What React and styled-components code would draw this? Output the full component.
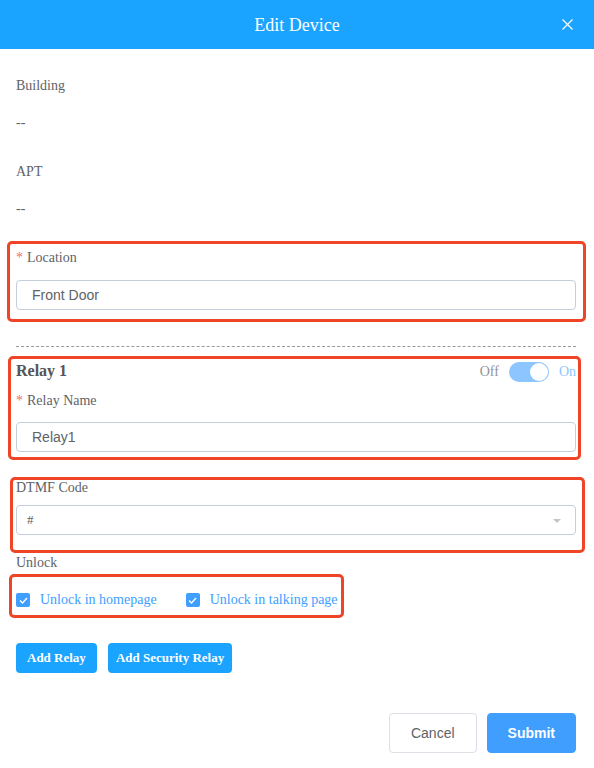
import React from "react"
import styled, { createGlobalStyle } from "styled-components"

const GlobalStyle = createGlobalStyle`
  body {
    margin: 0;
    background: #fff;
    font-family: "Liberation Serif", "Times New Roman", serif;
    color: #606266;
  }
`

const Dialog = styled.div`
  width: 594px;
  min-height: 768px;
  background: #fff;
`

const Header = styled.div`
  height: 49px;
  background: #1aa3ff;
  display: grid;
  grid-template-columns: 1fr auto 1fr;
  align-items: center;
  > .header__title {
    color: #fff;
    font-size: 18px;
    line-height: 24px;
    padding-top: 1px;
  }
  > .header__close {
    justify-self: end;
    margin-right: 21px;
    display: flex;
    background: none;
    border: 0;
    padding: 0;
    cursor: pointer;
  }
`

const Body = styled.div`
  padding: 0 18px 0 16px;
  display: flex;
  flex-direction: column;
`

const Label = styled.div`
  font-size: 14px;
  line-height: ${(props) => props.lh || 20}px;
  margin-top: ${(props) => props.mt || 0}px;
  color: #606266;
  > .label__star {
    color: #f56c6c;
    margin-right: 4px;
  }
`

const Value = styled.div`
  font-size: 14px;
  line-height: 20px;
  margin-top: 17px;
  color: #606266;
`

const Highlight = styled.div`
  border: 3px solid #ef4426;
  border-radius: 5px;
  margin: ${(props) => props.margin};
  padding: ${(props) => props.padding};
  display: ${(props) => (props.inline ? "flex" : "block")};
  gap: ${(props) => (props.inline ? "29px" : "0")};
  align-self: ${(props) => (props.inline ? "flex-start" : "stretch")};
`

const Input = styled.div`
  height: 30px;
  box-sizing: border-box;
  margin-top: ${(props) => props.mt || 12}px;
  border: 1px solid #c4cfdb;
  border-radius: 4px;
  display: flex;
  align-items: center;
  padding: 0 15px;
  font-family: "Liberation Sans", Arial, sans-serif;
  font-size: 14px;
  color: #606266;
`

const Select = styled(Input)`
  padding: 0 14px 0 10px;
  justify-content: space-between;
  font-family: "Liberation Serif", "Times New Roman", serif;
  font-size: 13px;
  > .select__arrow {
    width: 0;
    height: 0;
    border-left: 4px solid transparent;
    border-right: 4px solid transparent;
    border-top: 4px solid #c0c4cc;
    margin-top: 2px;
  }
`

const Divider = styled.div`
  margin-top: 24px;
  border-top: 1px dashed #9a9a9a;
`

const RelayHead = styled.div`
  display: flex;
  align-items: center;
  justify-content: space-between;
  height: 20px;
  > .relayHead__title {
    font-weight: bold;
    font-size: 16px;
    color: #555;
    margin-top: -2px;
  }
`

const SwitchWrap = styled.div`
  display: flex;
  align-items: center;
  font-size: 14px;
  > .switch__off {
    color: #909399;
    margin-right: 10px;
  }
  > .switch__on {
    color: #8cc5ff;
    margin-left: 10px;
  }
`

const Switch = styled.div`
  width: 40px;
  height: 20px;
  border-radius: 10px;
  background: #8cc5ff;
  display: flex;
  align-items: center;
  justify-content: flex-end;
  padding: 0 1px;
  box-sizing: border-box;
  > .switch__knob {
    width: 18px;
    height: 18px;
    border-radius: 50%;
    background: #fff;
  }
`

const CheckItem = styled.label`
  display: flex;
  align-items: center;
  gap: 10px;
  height: 20px;
  font-size: 14px;
  color: #409eff;
`

const CheckBox = styled.span`
  width: 14px;
  height: 14px;
  border-radius: 2px;
  background: #409eff;
  display: flex;
  align-items: center;
  justify-content: center;
`

const ButtonRow = styled.div`
  display: flex;
  gap: 11px;
  margin-top: 25px;
`

const SmallButton = styled.button`
  height: 30px;
  padding: 0 ${(props) => props.pad || 11}px;
  border: 0;
  border-radius: 4px;
  background: #1aa3ff;
  color: #fff;
  font-family: "Liberation Serif", "Times New Roman", serif;
  font-weight: bold;
  font-size: 13px;
  cursor: pointer;
`

const Footer = styled.div`
  display: flex;
  justify-content: flex-end;
  gap: 10px;
  margin-top: 40px;
`

const FooterButton = styled.button`
  height: 40px;
  box-sizing: border-box;
  padding: 0 ${(props) => (props.primary ? 20 : 21)}px;
  border-radius: 4px;
  border: 1px solid ${(props) => (props.primary ? "#409eff" : "#dcdfe6")};
  background: ${(props) => (props.primary ? "#409eff" : "#fff")};
  color: ${(props) => (props.primary ? "#fff" : "#606266")};
  font-family: "Liberation Sans", Arial, sans-serif;
  font-weight: ${(props) => (props.primary ? "bold" : "normal")};
  font-size: 14px;
  cursor: pointer;
`

const Check = () => (
  <CheckBox>
    <svg width="9" height="7" viewBox="0 0 9 7" fill="none">
      <path d="M1 3.5L3.5 6L8 1" stroke="#fff" strokeWidth="1.3" />
    </svg>
  </CheckBox>
)

const App = () => {
  return (
    <Dialog>
      <GlobalStyle />
      <Header>
        <span />
        <div className="header__title">Edit Device</div>
        <button className="header__close">
          <svg width="11" height="11" viewBox="0 0 11 11">
            <path d="M0.5 0.5L10.5 10.5M10.5 0.5L0.5 10.5" stroke="#fff" strokeWidth="1.2" />
          </svg>
        </button>
      </Header>
      <Body>
        <Label mt={27}>Building</Label>
        <Value>--</Value>
        <Label mt={29}>APT</Label>
        <Value>--</Value>

        <Highlight margin="22px -10px 0 -9px" padding="4px 7px 9px 6px">
          <Label>
            <span className="label__star">*</span>Location
          </Label>
          <Input>Front Door</Input>
        </Highlight>

        <Divider />

        <Highlight margin="9px -5px 0 -8px" padding="3px 2px 5px 5px">
          <RelayHead>
            <div className="relayHead__title">Relay 1</div>
            <SwitchWrap>
              <span className="switch__off">Off</span>
              <Switch>
                <span className="switch__knob" />
              </Switch>
              <span className="switch__on">On</span>
            </SwitchWrap>
          </RelayHead>
          <Label mt={9}>
            <span className="label__star">*</span>Relay Name
          </Label>
          <Input mt={11}>Relay1</Input>
        </Highlight>

        <Highlight margin="17px -9px 0 -6px" padding="0 6px 15px 3px">
          <Label lh={16}>DTMF Code</Label>
          <Select mt={9}>
            <span>#</span>
            <span className="select__arrow" />
          </Select>
        </Highlight>

        <Label>Unlock</Label>

        <Highlight inline margin="1px 0 0 -7px" padding="13px 3px 5px 4px">
          <CheckItem>
            <Check />
            Unlock in homepage
          </CheckItem>
          <CheckItem>
            <Check />
            Unlock in talking page
          </CheckItem>
        </Highlight>

        <ButtonRow>
          <SmallButton>Add Relay</SmallButton>
          <SmallButton pad={8}>Add Security Relay</SmallButton>
        </ButtonRow>

        <Footer>
          <FooterButton>Cancel</FooterButton>
          <FooterButton primary>Submit</FooterButton>
        </Footer>
      </Body>
    </Dialog>
  )
}

export default App
